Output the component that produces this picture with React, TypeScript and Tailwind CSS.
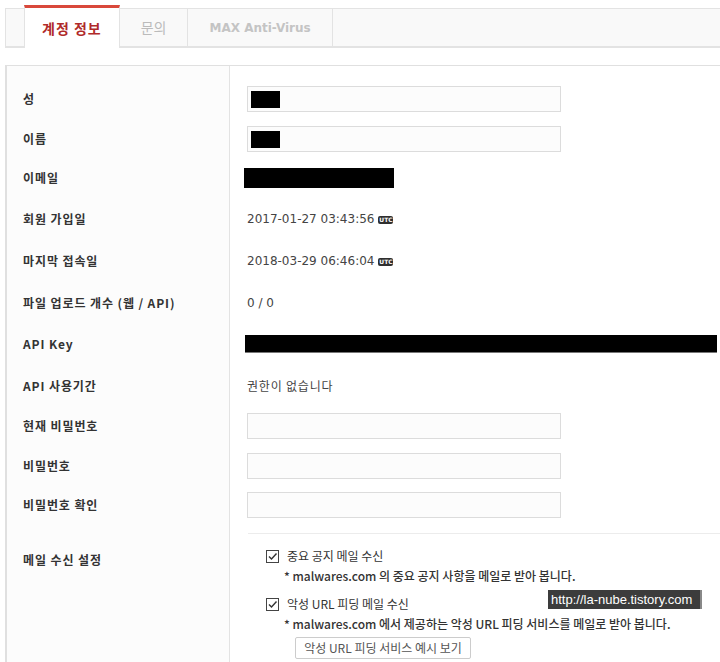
import React from "react";

const labelCell =
  "w-[223px] shrink-0 bg-[#fcfcfc] border-r border-[#e3e3e3] pl-[16px] flex items-center text-[12px] font-bold text-[#333] tracking-[0.9px]";

function UtcBadge() {
  return (
    <span className="ml-[4px] inline-flex items-center justify-center w-[15px] h-[8px] rounded-[2px] bg-[#2f2f2f] text-white text-[6px] leading-[8px] font-bold font-['DejaVu_Sans',sans-serif] align-middle">
      UTC
    </span>
  );
}

function TextInput({ masked }: { masked?: boolean }) {
  return (
    <div className="w-[314px] h-[26px] border border-[#dcdcdc] bg-[#fcfcfc] pl-[3px] pt-[4px]">
      {masked && <div className="w-[29px] h-[17px] bg-black" />}
    </div>
  );
}

function Check() {
  return (
    <svg width="13" height="13" viewBox="0 0 13 13" className="shrink-0">
      <rect x="0.5" y="0.5" width="12" height="12" fill="#fff" stroke="#444" />
      <path d="M3 6.5 L5.5 9 L10.5 3.5" fill="none" stroke="#333" strokeWidth="1.4" />
    </svg>
  );
}

interface Row {
  label: string;
  h: string;
  value: React.ReactNode;
  pad?: string;
}

const rows: Row[] = [
  { label: "성", h: "h-[40px]", value: <TextInput masked /> },
  { label: "이름", h: "h-[39px]", value: <TextInput masked /> },
  {
    label: "이메일",
    h: "h-[40px]",
    pad: "pl-[14px]",
    value: <div className="w-[150px] h-[20px] bg-black" />,
  },
  {
    label: "회원 가입일",
    h: "h-[42px]",
    value: (
      <span className="font-['DejaVu_Sans',sans-serif] text-[12px] text-[#444]">
        2017-01-27 03:43:56
        <UtcBadge />
      </span>
    ),
  },
  {
    label: "마지막 접속일",
    h: "h-[42px]",
    value: (
      <span className="font-['DejaVu_Sans',sans-serif] text-[12px] text-[#444]">
        2018-03-29 06:46:04
        <UtcBadge />
      </span>
    ),
  },
  {
    label: "파일 업로드 개수 (웹 / API)",
    h: "h-[41px]",
    value: <span className="font-['DejaVu_Sans',sans-serif] text-[12px] text-[#444]">0 / 0</span>,
  },
  {
    label: "API Key",
    h: "h-[42px]",
    pad: "pl-[15px]",
    value: <div className="w-[472px] h-[18px] bg-black border-b border-[#777]" />,
  },
  {
    label: "API 사용기간",
    h: "h-[41px]",
    value: <span className="text-[12px] text-[#444] tracking-[0.8px]">권한이 없습니다</span>,
  },
  { label: "현재 비밀번호", h: "h-[40px]", value: <TextInput /> },
  { label: "비밀번호", h: "h-[39px]", value: <TextInput /> },
  { label: "비밀번호 확인", h: "h-[40px]", value: <TextInput /> },
];

export default function App() {
  return (
    <div className="relative w-[720px] h-[662px] overflow-hidden bg-white font-['Noto_Sans_CJK_KR',sans-serif]">
      {/* Tabs */}
      <div className="mt-[8px] ml-[5px] h-[40px] flex border-t border-l border-b-2 border-[#e3e3e3] bg-[#f9f9f9] pl-[18px]">
        <div className="-mt-[4px] -mb-[2px] px-[17px] flex items-center bg-white border-t-[3px] border-t-[#d9483b] border-x border-x-[#e3e3e3] text-[14px] font-bold text-[#b02a2a] tracking-[1px]">
          계정 정보
        </div>
        <div className="px-[21px] flex items-center border-r border-[#e3e3e3] text-[14px] text-[#bbb]">
          문의
        </div>
        <div className="px-[21px] flex items-center border-r border-[#e3e3e3] text-[12px] font-bold text-[#c4c4c4] font-['DejaVu_Sans',sans-serif]">
          MAX Anti-Virus
        </div>
      </div>

      {/* Panel */}
      <div className="mt-[17px] ml-[5px] border-t border-l-2 border-[#e0e0e0] h-[620px] flex flex-col">
        <div className="flex h-[13px]">
          <div className="w-[223px] shrink-0 bg-[#fcfcfc] border-r border-[#e3e3e3]" />
        </div>
        {rows.map((r) => (
          <div key={r.label} className={`flex ${r.h}`}>
            <div className={labelCell}>{r.label}</div>
            <div className={`flex items-center ${r.pad ?? "pl-[17px]"}`}>{r.value}</div>
          </div>
        ))}

        {/* Mail settings */}
        <div className="flex flex-1">
          <div className="w-[223px] shrink-0 bg-[#fcfcfc] border-r border-[#e3e3e3] pl-[16px] pt-[25px] text-[12px] font-bold text-[#333] leading-[20px] tracking-[0.9px]">
            메일 수신 설정
          </div>
          <div className="flex-1 pt-[8px] pl-[18px]">
            <div className="border-t border-[#ececec] pt-[12px] pl-[18px] text-[12px] text-[#333]">
              <div className="h-[20px] flex items-center gap-[8px]">
                <Check />
                <span>중요 공지 메일 수신</span>
              </div>
              <div className="h-[20px] flex items-center pl-[18px] font-medium">
                * malwares.com 의 중요 공지 사항을 메일로 받아 봅니다.
              </div>
              <div className="mt-[8px] h-[20px] flex items-center gap-[8px]">
                <Check />
                <span>악성 URL 피딩 메일 수신</span>
              </div>
              <div className="h-[20px] flex items-center pl-[18px] font-medium">
                * malwares.com 에서 제공하는 악성 URL 피딩 서비스를 메일로 받아 봅니다.
              </div>
              <div className="pl-[29px] mt-[3px]">
                <button className="h-[22px] w-[176px] border border-[#ccc] rounded-[2px] bg-white text-[12px] text-[#555]">
                  악성 URL 피딩 서비스 예시 보기
                </button>
              </div>
            </div>
          </div>
        </div>
      </div>

      {/* Watermark */}
      <div className="absolute left-[548px] top-[590px] h-[19px] w-[154px] bg-[#3c3c3c] border-r-2 border-[#888] pl-[3px] flex items-center text-[13px] text-white font-['Liberation_Sans',sans-serif] leading-none">
        http://la-nube.tistory.com
      </div>
    </div>
  );
}
